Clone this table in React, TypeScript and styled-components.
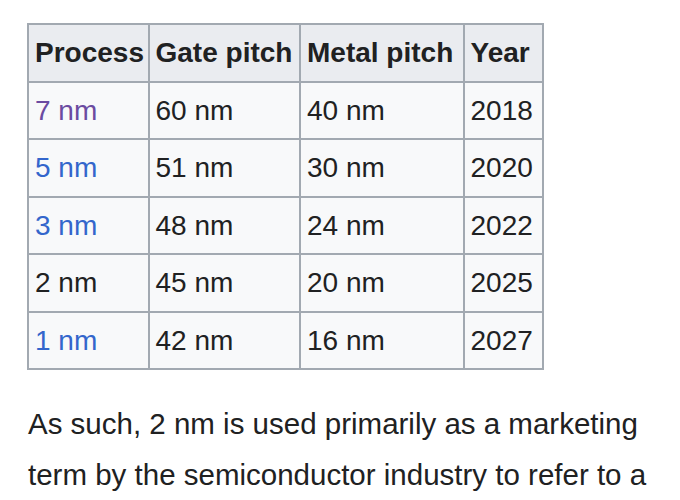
import styled, { createGlobalStyle } from 'styled-components';

const GlobalStyle = createGlobalStyle`
  html, body {
    margin: 0;
    padding: 0;
    background: #ffffff;
  }
  body {
    font-family: 'Liberation Sans', Arial, sans-serif;
    color: #202122;
  }
`;

const Page = styled.main`
  width: 680px;
  height: 500px;
  overflow: hidden;
  padding: 23px 0 0 27px;
  box-sizing: border-box;
`;

const Table = styled.table`
  width: 515px;
  border-collapse: collapse;
  table-layout: fixed;
  font-size: 28px;
  line-height: 1.2;
  color: #202122;
`;

const HeadCell = styled.th<{ $w: number }>`
  width: ${(p) => p.$w}px;
  height: 57.5px;
  padding: 0 3px 0 6px;
  border: 2px solid #a2a9b1;
  background: #eaecf0;
  font-weight: bold;
  text-align: left;
  white-space: nowrap;
  vertical-align: middle;
  box-sizing: border-box;
`;

const Cell = styled.td`
  height: 57.6px;
  padding: 0 3px 0 6px;
  border: 2px solid #a2a9b1;
  background: #f8f9fa;
  white-space: nowrap;
  vertical-align: middle;
  box-sizing: border-box;
`;

const NodeLink = styled.a<{ $visited?: boolean }>`
  color: ${(p) => (p.$visited ? '#6b4ba1' : '#3366cc')};
  text-decoration: none;
`;

const Paragraph = styled.p`
  margin: 28px 0 0 1px;
  width: 640px;
  font-size: 29.5px;
  line-height: 51px;
  color: #202122;
`;

type Row = {
  process: string;
  link?: 'plain' | 'visited';
  gate: string;
  metal: string;
  year: string;
};

const rows: Row[] = [
  { process: '7 nm', link: 'visited', gate: '60 nm', metal: '40 nm', year: '2018' },
  { process: '5 nm', link: 'plain', gate: '51 nm', metal: '30 nm', year: '2020' },
  { process: '3 nm', link: 'plain', gate: '48 nm', metal: '24 nm', year: '2022' },
  { process: '2 nm', gate: '45 nm', metal: '20 nm', year: '2025' },
  { process: '1 nm', link: 'plain', gate: '42 nm', metal: '16 nm', year: '2027' },
];

export default function App() {
  return (
    <Page>
      <GlobalStyle />
      <Table>
        <thead>
          <tr>
            <HeadCell $w={120.5}>Process</HeadCell>
            <HeadCell $w={151.5}>Gate pitch</HeadCell>
            <HeadCell $w={163.5}>Metal pitch</HeadCell>
            <HeadCell $w={79.5}>Year</HeadCell>
          </tr>
        </thead>
        <tbody>
          {rows.map((r) => (
            <tr key={r.process}>
              <Cell>
                {r.link ? (
                  <NodeLink href="#" $visited={r.link === 'visited'}>
                    {r.process}
                  </NodeLink>
                ) : (
                  r.process
                )}
              </Cell>
              <Cell>{r.gate}</Cell>
              <Cell>{r.metal}</Cell>
              <Cell>{r.year}</Cell>
            </tr>
          ))}
        </tbody>
      </Table>
      <Paragraph>
        As such, 2 nm is used primarily as a marketing term by the semiconductor industry to
        refer to a
      </Paragraph>
    </Page>
  );
}
